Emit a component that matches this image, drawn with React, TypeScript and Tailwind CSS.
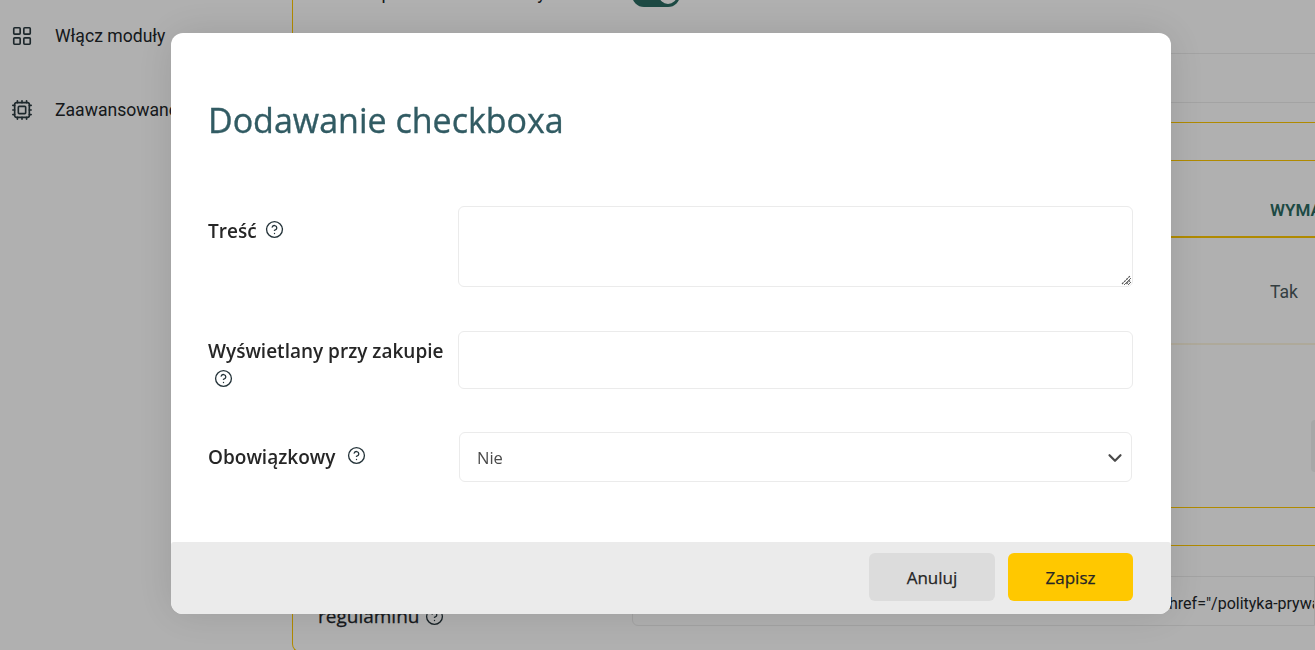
import { ChevronDown, CircleHelp, Cpu, LayoutGrid } from 'lucide-react';

function Help({ className = '' }: { className?: string }) {
  return <CircleHelp size={19} strokeWidth={1.7} className={`text-[#25343a] shrink-0 ${className}`} />;
}

function Background() {
  return (
    <div className="flex h-[650px] overflow-hidden bg-white font-['Roboto',sans-serif] text-[#212529]">
      {/* Sidebar */}
      <aside className="w-[292px] shrink-0 pl-[11px] pt-[24px] flex flex-col gap-[50px] text-[17.6px]">
        <div className="flex items-center h-6 relative">
          <LayoutGrid size={22} strokeWidth={1.8} className="text-[#2b3a40]" />
          <span className="ml-[22px]">Włącz moduły</span>
          <ChevronDown size={16} className="absolute left-[211px] top-[4px] text-[#2b3a40]" />
        </div>
        <div className="flex items-center h-6">
          <Cpu size={22} strokeWidth={1.8} className="text-[#2b3a40]" />
          <span className="ml-[22px]">Zaawansowane</span>
        </div>
      </aside>

      {/* Main settings panel */}
      <main className="flex-1 min-w-0 h-[652px] flex flex-col border-l border-b border-[#ffc800] rounded-bl-lg">
        <div className="h-[54px] shrink-0 flex items-start border-b border-[#ececec] pl-[25px]">
          <span className="w-[314px] -mt-[21px] text-lg whitespace-nowrap">Zobacz podsumowanie kasy</span>
          <div className="w-12 h-6 -mt-[17px] rounded-full bg-[#2a6b62] flex justify-end items-center pr-[3px]">
            <div className="w-[18px] h-[18px] rounded-full bg-white" />
          </div>
        </div>
        <div className="h-[49px] shrink-0 border-b border-[#ececec]" />
        <div className="h-[20px] shrink-0 border-b border-[#ffc800]" />
        <div className="h-[38px] shrink-0 border-b border-[#ffc800]" />
        <div className="h-[77px] shrink-0 border-b-2 border-[#ffc800] flex items-end justify-end pb-[13px]">
          <span className="w-[45px] overflow-hidden text-[17px] font-semibold text-[#2a6b62] whitespace-nowrap">WYMAGANY</span>
        </div>
        <div className="h-[107px] shrink-0 border-b-2 border-[#fdf5e0] flex items-center justify-end pt-[3px]">
          <span className="w-[45px] text-[17.6px] text-[#4c5a5e]">Tak</span>
        </div>
        <div className="h-[163px] shrink-0 border-b border-[#ffc800] flex justify-end items-start pt-[75px]">
          <div className="w-1 h-[52px] rounded-l bg-[#f2f2f2]" />
        </div>
        <div className="h-[38px] shrink-0 border-b border-[#ffc800]" />
        <div className="flex pl-[25px] pt-[30px]">
          <span className="w-[314px] pt-[31px] h-[50px] flex items-center gap-[6px] font-['Open_Sans',sans-serif] text-[19px] [-webkit-text-stroke:0.25px]">
            regulaminu <Help />
          </span>
          <div className="flex-1 h-[50px] border border-[#ececec] rounded-l-md flex items-center pt-[6px] pl-[100px] overflow-hidden">
            <span className="text-base whitespace-nowrap ml-[436px]">href="/polityka-prywatnosci"</span>
          </div>
        </div>
      </main>
    </div>
  );
}

export default function App() {
  return (
    <div className="h-[650px] overflow-hidden relative">
      <Background />

      {/* Modal */}
      <div className="fixed inset-0 bg-black/31 flex items-start justify-center pt-[33px] pl-[27px] font-['Open_Sans',sans-serif] text-[#262626]">
        <div className="w-[1000px] h-[581px] bg-white rounded-xl shadow-[0_0_40px_rgba(0,0,0,0.12)] flex flex-col">
          <div className="flex-1 pl-[37px] pr-[38px]">
            <h2 className="mt-[63px] h-[48px] leading-[48px] text-[34px] [-webkit-text-stroke:0.35px] text-[#315b63]">
              Dodawanie checkboxa
            </h2>

            <div className="mt-[62px] flex">
              <label className="w-[250px] flex items-start gap-2 text-[19px] font-semibold leading-[24px] pt-[13px]">
                Treść <Help className="mt-[1px]" />
              </label>
              <div className="flex-1 h-[81px] relative">
                <textarea className="block w-full h-full border border-[#ebebeb] rounded-md outline-none p-3" />
                <svg width="10" height="10" viewBox="0 0 10 10" className="absolute right-[2px] bottom-[2px] pointer-events-none" fill="none" stroke="#555" strokeWidth="1.2">
                  <path d="M1 9 9 1M5.5 9 9 5.5" strokeDasharray="2.2 0.8" />
                </svg>
              </div>
            </div>

            <div className="mt-[44px] flex">
              <label className="w-[250px] text-[19px] font-semibold leading-[24px] pt-2">
                Wyświetlany przy zakupie
                <Help className="ml-[6px] mt-[6px]" />
              </label>
              <input className="flex-1 h-[58px] border border-[#ebebeb] rounded-md outline-none px-3" />
            </div>

            <div className="mt-[43px] flex">
              <label className="w-[250px] flex items-start gap-3 text-[19px] font-semibold leading-[24px] pt-[13px]">
                Obowiązkowy <Help className="mt-[1px]" />
              </label>
              <div className="flex-1 mx-px relative">
                <select className="w-full h-[50px] appearance-none bg-white border border-[#ebebeb] rounded-md outline-none pl-[17px] pt-[3px] text-[16.5px] text-[#4a4a4a]">
                  <option>Nie</option>
                  <option>Tak</option>
                </select>
                <ChevronDown size={22} strokeWidth={2.4} className="absolute right-[6px] top-[15px] text-[#4a4a4a] pointer-events-none" />
              </div>
            </div>
          </div>

          <div className="h-[72px] bg-[#ebebeb] rounded-t-[3px] rounded-b-xl flex items-center justify-end gap-[13px] pr-[38px] pb-[2px]">
            <button className="w-[126px] h-[48px] rounded-md bg-[#dcdcdc] text-[17px] [-webkit-text-stroke:0.25px] pt-px">Anuluj</button>
            <button className="w-[125px] h-[48px] rounded-md bg-[#ffc800] text-[17px] [-webkit-text-stroke:0.25px] pt-px">Zapisz</button>
          </div>
        </div>
      </div>
    </div>
  );
}
